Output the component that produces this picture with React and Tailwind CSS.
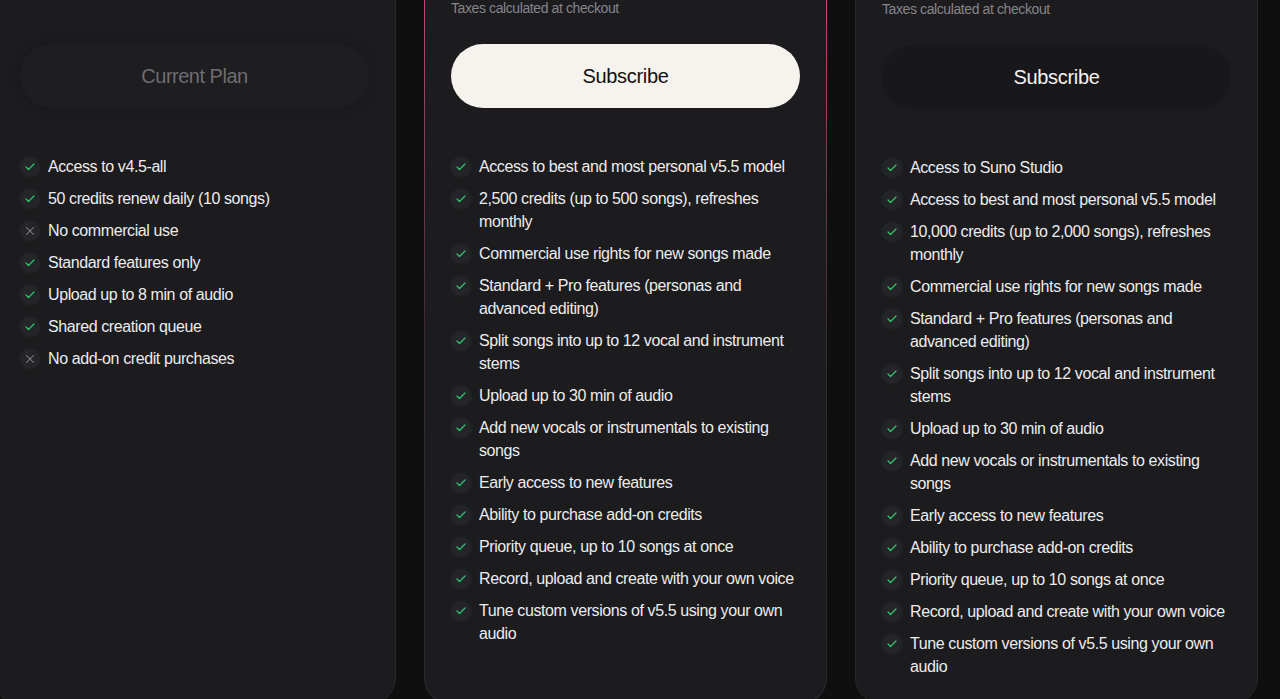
import { Check, X } from "lucide-react";

const freeFeatures = [
  { text: "Access to v4.5-all", ok: true },
  { text: "50 credits renew daily (10 songs)", ok: true },
  { text: "No commercial use", ok: false },
  { text: "Standard features only", ok: true },
  { text: "Upload up to 8 min of audio", ok: true },
  { text: "Shared creation queue", ok: true },
  { text: "No add-on credit purchases", ok: false },
];

const proFeatures = [
  "Access to best and most personal v5.5 model",
  "2,500 credits (up to 500 songs), refreshes monthly",
  "Commercial use rights for new songs made",
  "Standard + Pro features (personas and advanced editing)",
  "Split songs into up to 12 vocal and instrument stems",
  "Upload up to 30 min of audio",
  "Add new vocals or instrumentals to existing songs",
  "Early access to new features",
  "Ability to purchase add-on credits",
  "Priority queue, up to 10 songs at once",
  "Record, upload and create with your own voice",
  "Tune custom versions of v5.5 using your own audio",
];

const premierFeatures = [
  "Access to Suno Studio",
  "Access to best and most personal v5.5 model",
  "10,000 credits (up to 2,000 songs), refreshes monthly",
  "Commercial use rights for new songs made",
  "Standard + Pro features (personas and advanced editing)",
  "Split songs into up to 12 vocal and instrument stems",
  "Upload up to 30 min of audio",
  "Add new vocals or instrumentals to existing songs",
  "Early access to new features",
  "Ability to purchase add-on credits",
  "Priority queue, up to 10 songs at once",
  "Record, upload and create with your own voice",
  "Tune custom versions of v5.5 using your own audio",
];

function FeatureList({ items }) {
  return (
    <ul className="mt-[47px] flex flex-col gap-[9px]">
      {items.map((f, i) => (
        <li key={i} className="flex items-start gap-[8px] text-[16px] leading-[23px] tracking-[-0.4px] text-[#ececec]">
          <span className="mt-[1.5px] flex h-[20px] w-[20px] shrink-0 items-center justify-center rounded-full bg-[#252428] shadow-[0_0_4px_rgba(34,197,94,0.12)]">
            {f.ok ? (
              <Check size={12} strokeWidth={2.5} className="text-[#2fc46b]" />
            ) : (
              <X size={14} strokeWidth={1.75} className="text-[#8b8b8e]" />
            )}
          </span>
          <span>{f.text}</span>
        </li>
      ))}
    </ul>
  );
}

function Card({ children, highlight }) {
  if (highlight) {
    return (
      <div className="h-[744px] w-[403px] shrink-0 rounded-[26px] bg-gradient-to-b from-[#d24a88] via-[#3a2a33] to-[#2a292d] p-px">
        <div className="h-full rounded-[25px] bg-[#1c1b1e] px-[26px] pt-[37px]">{children}</div>
      </div>
    );
  }
  return (
    <div className="h-[744px] w-[403px] shrink-0 rounded-[26px] border border-[#28272b] bg-[#1c1b1e] px-[26px] pt-[37px]">
      {children}
    </div>
  );
}

export default function App() {
  return (
    <div className="h-[699px] overflow-hidden bg-[#0f0f10] font-['Liberation_Sans',Arial,sans-serif]">
      <div className="-mt-[40px] ml-[-7px] flex gap-[28px]">
        <Card>
          <div className="h-[20px]" />
          <button className="mt-[26px] flex h-[64px] w-full items-center justify-center rounded-full bg-[#1e1d20] text-[20px] tracking-[-0.5px] text-[#6e6d71] shadow-[0_0_12px_rgba(0,0,0,0.15)]">
            Current Plan
          </button>
          <FeatureList items={freeFeatures} />
        </Card>
        <Card highlight>
          <p className="h-[20px] text-[14px] leading-[20px] tracking-[-0.4px] text-[#86858a]">Taxes calculated at checkout</p>
          <button className="mt-[26px] flex h-[64px] w-full items-center justify-center rounded-full bg-[#f6f3ee] text-[20px] tracking-[-0.3px] text-[#111]">
            Subscribe
          </button>
          <FeatureList items={proFeatures.map((t) => ({ text: t, ok: true }))} />
        </Card>
        <Card>
          <p className="mt-[1px] h-[20px] text-[14px] leading-[20px] tracking-[-0.4px] text-[#86858a]">Taxes calculated at checkout</p>
          <button className="mt-[26px] flex h-[64px] w-full items-center justify-center rounded-full bg-[#18171a] text-[20px] tracking-[-0.3px] text-[#f2f2f2]">
            Subscribe
          </button>
          <FeatureList items={premierFeatures.map((t) => ({ text: t, ok: true }))} />
        </Card>
      </div>
    </div>
  );
}
